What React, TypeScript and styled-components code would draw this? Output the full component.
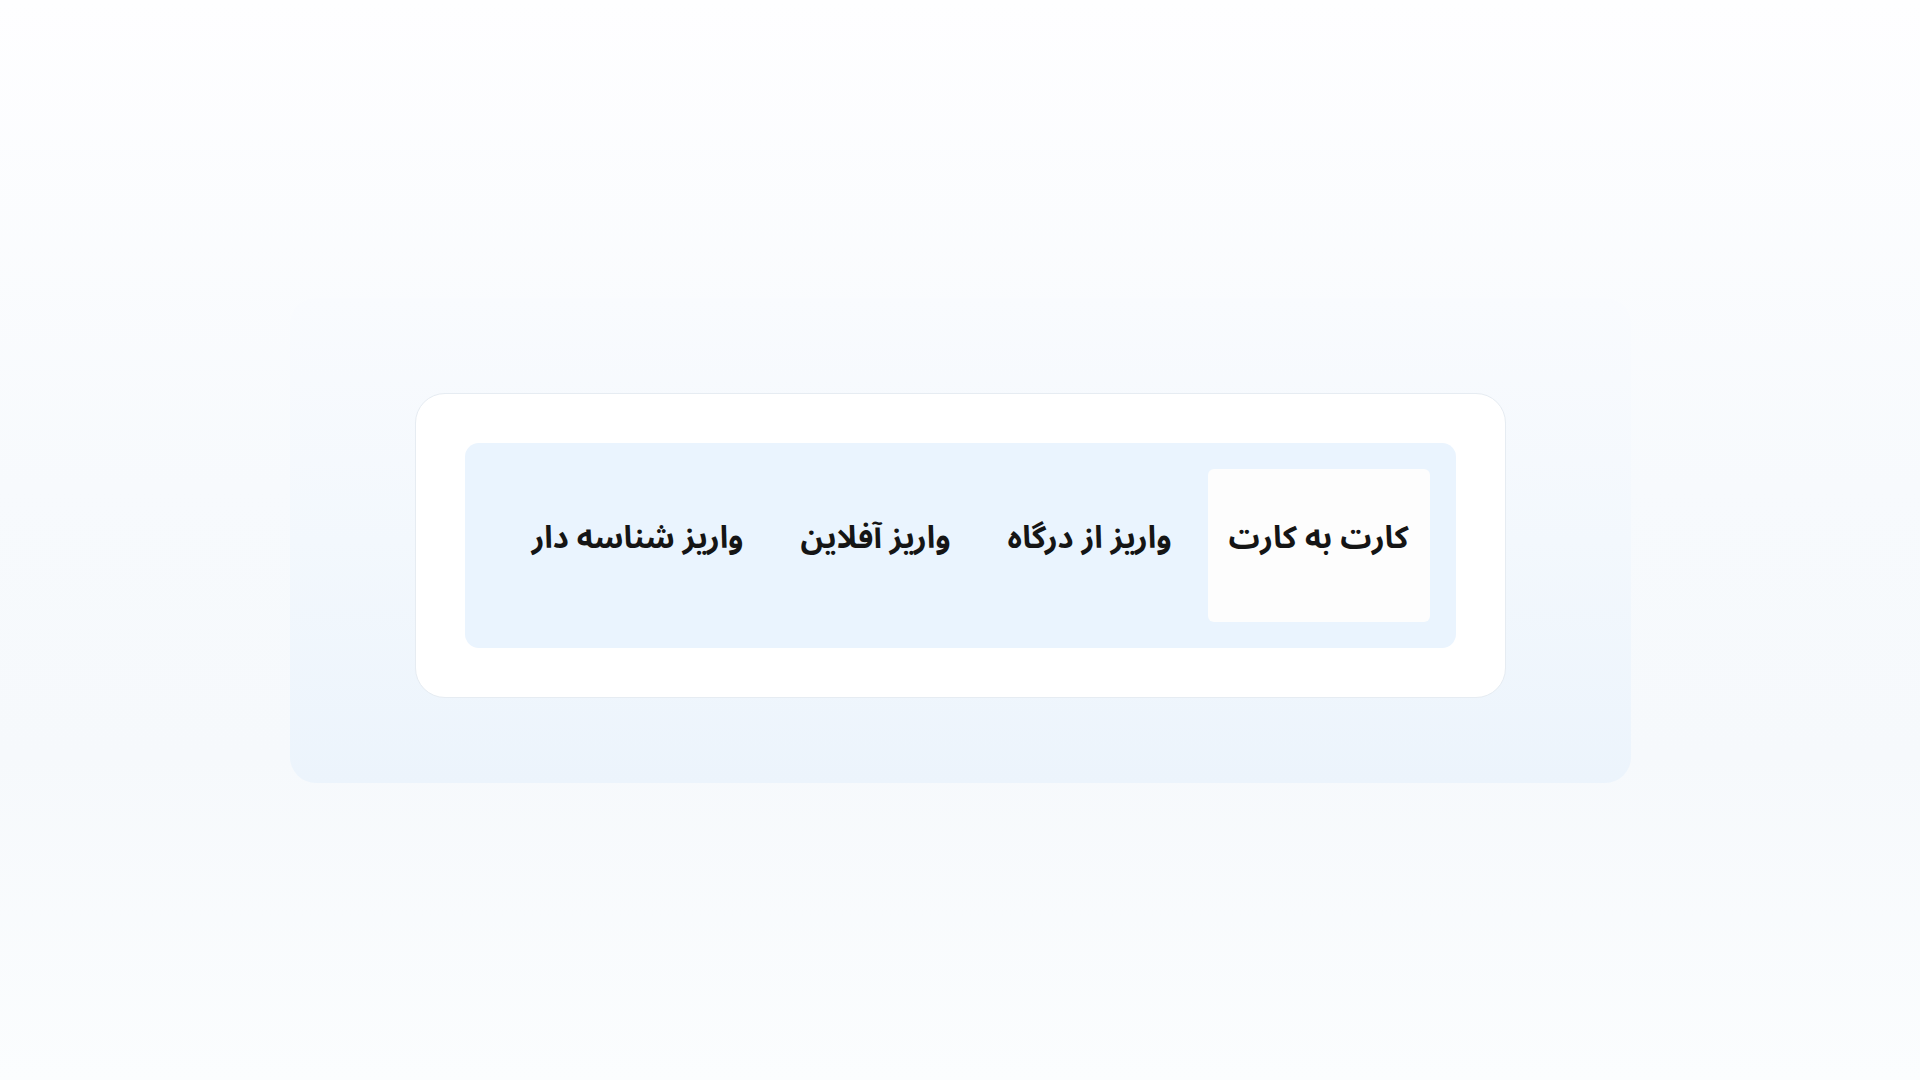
import React, { useState } from "react";
import styled, { createGlobalStyle } from "styled-components";

const GlobalStyle = createGlobalStyle`
  html, body {
    margin: 0;
    padding: 0;
  }
  body {
    font-family: "Noto Sans Arabic", "DejaVu Sans", sans-serif;
    background: linear-gradient(180deg, #fefeff 0%, #f7fafd 45%, #f6f9fc 70%, #fbfdfe 100%);
  }
`;

const Page = styled.main`
  min-height: 100vh;
  display: flex;
  align-items: center;
  justify-content: center;
`;

const Panel = styled.section`
  width: 1341px;
  box-sizing: border-box;
  padding: 95px 125px 85px;
  border-radius: 26px;
  background: linear-gradient(180deg, #f9fbfe 0%, #f3f8fd 50%, #ecf4fc 100%);
  display: flex;
  justify-content: center;
`;

const Card = styled.div`
  width: 100%;
  box-sizing: border-box;
  padding: 49px;
  background: #ffffff;
  border: 1px solid #e6ecf2;
  border-radius: 30px;
`;

const TabList = styled.div`
  display: flex;
  direction: rtl;
  align-items: stretch;
  gap: 15px;
  padding: 26px;
  background: #eaf4fe;
  border-radius: 14px;
`;

const Tab = styled.button<{ $active?: boolean }>`
  height: 153px;
  padding: 0 21px 14px;
  border: none;
  border-radius: 6px;
  background: ${(p) => (p.$active ? "#fdfdfd" : "transparent")};
  color: #151515;
  font-family: inherit;
  font-size: 31px;
  font-weight: 700;
  line-height: 1;
  white-space: nowrap;
  cursor: pointer;
  display: flex;
  align-items: center;
  justify-content: center;
`;

const tabs = ["کارت به کارت", "واریز از درگاه", "واریز آفلاین", "واریز شناسه دار"];

export default function App() {
  const [active, setActive] = useState(0);
  return (
    <>
      <GlobalStyle />
      <Page>
        <Panel>
          <Card>
            <TabList>
              {tabs.map((t, i) => (
                <Tab key={t} $active={i === active} onClick={() => setActive(i)}>
                  {t}
                </Tab>
              ))}
            </TabList>
          </Card>
        </Panel>
      </Page>
    </>
  );
}
